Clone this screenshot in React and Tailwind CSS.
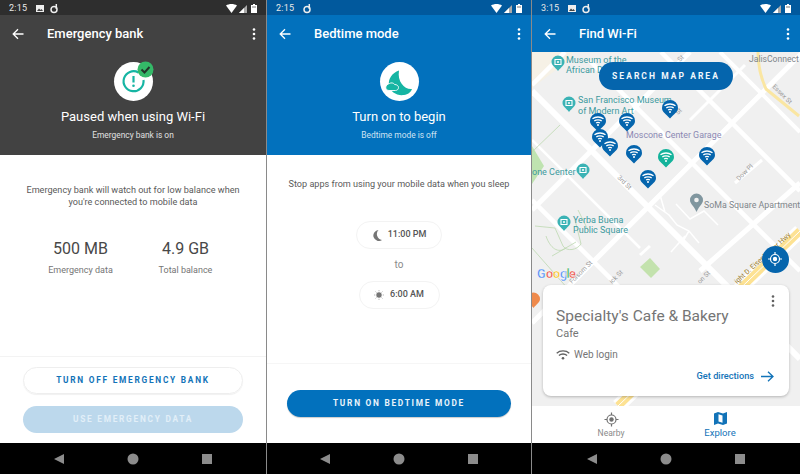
// App.jsx
import React from "react";

const StatusBar = ({ time, bg, image }) => (
  <div className={`flex h-[15px] shrink-0 items-center justify-between pl-[9px] pr-[9px] pt-[2px] ${bg}`}>
    <div className="flex items-center">
      <span className="text-[9px] leading-none text-[#e8e8e8] tracking-[0.2px]">{time}</span>
      {image && (
        <svg width="8" height="7" viewBox="0 0 8 7" className="ml-[9px]">
          <path d="M0 0h8v7H0z" fill="#eee" />
          <path d="M1 6l2-2.5L4.500 5 5.500 4 7 6z" fill="#444" />
        </svg>
      )}
      <svg width="8" height="11" viewBox="0 0 8 11" className={image ? "ml-[6px]" : "ml-[9px]"}>
        <circle cx="4" cy="6.500" r="3" fill="none" stroke="#eee" strokeWidth="1.500" />
        <path d="M6.300 1v5" stroke="#eee" strokeWidth="1.500" />
      </svg>
    </div>
    <div className="flex items-center gap-[2px]">
      <svg width="11" height="9" viewBox="0 0 11 9">
        <path d="M0 1.500C3 -.5 8 -.5 11 1.500L5.500 9z" fill="#fff" />
      </svg>
      <svg width="8" height="8" viewBox="0 0 8 8">
        <path d="M8 0v8H0z" fill="#aaa" />
        <path d="M5 3v5H0z" fill="#fff" />
      </svg>
      <svg width="6" height="9" viewBox="0 0 6 9" className="ml-[2px]">
        <path d="M2 0h2v1h2v8H0V1h2z" fill="#fff" />
        <path d="M1 2h4v2H1z" fill="#bbb" />
      </svg>
    </div>
  </div>
);

const AppBar = ({ title }) => (
  <div className="flex h-[37px] shrink-0 items-center">
    <svg width="12" height="12" viewBox="0 0 12 12" className="ml-[12px]">
      <path d="M11.500 6H1.500M6 1.200L1.200 6 6 10.800" fill="none" stroke="#fff" strokeWidth="1.300" />
    </svg>
    <span className="ml-[23px] flex-1 text-[13px] font-medium leading-none text-white">{title}</span>
    <svg width="4" height="12" viewBox="0 0 4 12" className="mr-[10px]">
      <circle cx="2" cy="1.500" r="1.300" fill="#fff" />
      <circle cx="2" cy="6" r="1.300" fill="#fff" />
      <circle cx="2" cy="10.500" r="1.300" fill="#fff" />
    </svg>
  </div>
);

const NavBar = () => (
  <div className="flex h-[31px] shrink-0 items-center justify-center gap-[63px] bg-black">
    <svg width="10" height="10" viewBox="0 0 10 10">
      <path d="M10 0v10L0 5z" fill="#8c8c8c" />
    </svg>
    <svg width="12" height="12" viewBox="0 0 12 12">
      <circle cx="6" cy="6" r="5.500" fill="#8c8c8c" />
    </svg>
    <div className="h-[10px] w-[10px] bg-[#8c8c8c]" />
  </div>
);

const Hero = ({ title, sub, subColor, children }) => (
  <div className="flex h-[103px] shrink-0 flex-col items-center pt-[10px]">
    <div className="relative h-[39px] w-[39px] rounded-full bg-white">{children}</div>
    <div className="mt-[7px] text-[13px] leading-[18px] text-white">{title}</div>
    <div className={`mt-[3px] text-[8.400px] leading-[12px] ${subColor}`}>{sub}</div>
  </div>
);

const PillButton = ({ className, children }) => (
  <div className={`flex h-[27px] items-center justify-center rounded-full text-[8.300px] font-bold tracking-[0.21em] ${className}`}>
    {children}
  </div>
);

const Stat = ({ value, label }) => (
  <div className="flex w-[105px] flex-col items-center">
    <div className="text-[16px] leading-[20px] text-[#484848]">{value}</div>
    <div className="mt-[5px] text-[9px] leading-[12px] text-[#757575]">{label}</div>
  </div>
);

const TimePill = ({ width, icon, time }) => (
  <div className={`flex h-[28px] items-center justify-center gap-[6px] rounded-full border border-[#f3f3f3] text-[9px] font-medium text-[#555] ${width}`}>
    {icon}
    {time}
  </div>
);

const EmergencyPanel = () => (
  <div className="flex h-full w-[266px] shrink-0 flex-col bg-white">
    <div className="flex shrink-0 flex-col bg-[#424242]">
      <StatusBar time="2:15" bg="bg-[#2e2e2e]" image />
      <AppBar title="Emergency bank" />
      <Hero title="Paused when using Wi-Fi" sub="Emergency bank is on" subColor="text-[#e0e0e0]">
        <svg width="39" height="39" viewBox="0 0 39 39">
          <path d="M24.500 10.500A10 10 0 1 0 29.500 18" fill="none" stroke="#16b5a3" strokeWidth="2.200" />
          <path d="M19.500 14v6.500" stroke="#16b5a3" strokeWidth="2.200" />
          <circle cx="19.500" cy="23.800" r="1.300" fill="#16b5a3" />
        </svg>
        <svg width="17" height="17" viewBox="0 0 17 17" className="absolute right-[-1px] top-[-1px]">
          <circle cx="8.500" cy="8.500" r="8" fill="#34b968" />
          <path d="M4.500 8.500l3 3 5-5.500" fill="none" stroke="#22352a" strokeWidth="2" />
        </svg>
      </Hero>
    </div>
    <div className="flex flex-1 flex-col items-center pt-[30px]">
      <p className="text-center text-[9.100px] leading-[11.500px] text-[#5a5a5a]">
        Emergency bank will watch out for low balance when
        <br />
        you're connected to mobile data
      </p>
      <div className="mt-[31px] flex w-[210px]">
        <Stat value="500 MB" label="Emergency data" />
        <Stat value="4.9 GB" label="Total balance" />
      </div>
    </div>
    <div className="flex h-[87px] shrink-0 flex-col gap-[12px] border-t border-[#f3f3f3] px-[23px] pt-[10px]">
      <PillButton className="border border-[#eeeeee] text-[#1273b8] shadow-[0_1px_1px_rgba(0,0,0,0.06)]">
        TURN OFF EMERGENCY BANK
      </PillButton>
      <PillButton className="bg-[#bcd8ec] text-[#e2eff8]">USE EMERGENCY DATA</PillButton>
    </div>
    <NavBar />
  </div>
);

const BedtimePanel = () => (
  <div className="flex h-full w-[264px] shrink-0 flex-col bg-white">
    <div className="flex shrink-0 flex-col bg-[#0271bd]">
      <StatusBar time="2:15" bg="bg-[#01599d]" />
      <AppBar title="Bedtime mode" />
      <Hero title="Turn on to begin" sub="Bedtime mode is off" subColor="text-[#cfe3f3]">
        <svg width="39" height="39" viewBox="0 0 39 39">
          <path d="M19 8.500C12 11 8 17 9 23c1 7 8 11 15 10 4-.5 7-3 8-6-7 1-15-7-13-18.500z" fill="#16b5a3" />
          <path d="M9.500 21.500c1.500-1 4-.8 5.200 1 2 0 3.800 1.200 3.800 3 0 1.700-1.300 3-3 3H9c-1.800 0-3.200-1.300-3.200-3 0-2 1.700-3.400 3.700-4z" fill="#16b5a3" stroke="#fff" strokeWidth="0.900" />
        </svg>
      </Hero>
    </div>
    <div className="flex flex-1 flex-col items-center pt-[23px]">
      <p className="text-center text-[9.100px] leading-[12px] text-[#5a5a5a]">
        Stop apps from using your mobile data when you sleep
      </p>
      <div className="mt-[31px]">
        <TimePill
          width="w-[86px]"
          time="11:00 PM"
          icon={
            <svg width="10" height="11" viewBox="0 0 10 11">
              <path d="M6.500 0A5.500 5.500 0 1 0 10 10 6 6 0 0 1 6.500 0z" fill="#757575" />
            </svg>
          }
        />
      </div>
      <div className="my-[10px] text-[10px] leading-[12px] text-[#8a8a8a]">to</div>
      <TimePill
        width="w-[81px]"
        time="6:00 AM"
        icon={
          <svg width="10" height="10" viewBox="0 0 10 10">
            <circle cx="5" cy="5" r="2.700" fill="#757575" />
            <path d="M5 0v1.300M5 8.700V10M0 5h1.300M8.700 5H10M1.500 1.500l1 1M7.500 7.500l1 1M1.500 8.500l1-1M7.500 2.500l1-1" stroke="#9a9a9a" strokeWidth="0.700" />
          </svg>
        }
      />
    </div>
    <div className="flex h-[80px] shrink-0 flex-col border-t border-[#f6f6f6] px-[20px] pt-[26px]">
      <PillButton className="bg-[#0271bd] text-[#eaf4fb] shadow-[0_1px_1px_rgba(0,0,0,0.2)]">
        TURN ON BEDTIME MODE
      </PillButton>
    </div>
    <NavBar />
  </div>
);

const WifiPin = ({ x, y, color = "#0565ad" }) => (
  <g transform={`translate(${x} ${y})`}>
    <path d="M-8 0a8 8 0 0 1 16 0c0 4-4 6-8 10.500C-4 6-8 4-8 0z" fill={color} />
    <path d="M-5.500 -2.200C-2.500 -4.600 2.500 -4.600 5.500 -2.200M-3.700 0C-1.800 -1.600 1.800 -1.600 3.700 0M-1.900 2.100C-.9 1.300 .9 1.300 1.900 2.100" fill="none" stroke="#fff" strokeWidth="1.300" />
    <circle cx="0" cy="4" r="1" fill="#fff" />
  </g>
);

const PoiPin = ({ x, y, color }) => (
  <g transform={`translate(${x} ${y})`}>
    <path d="M-6.500 0a6.500 6.500 0 0 1 13 0c0 3.500-3.500 5-6.500 9C-3 5-6.500 3.500-6.500 0z" fill={color} />
    <path d="M-3 -2.500h6v5h-6z" fill="none" stroke="#fff" strokeWidth="1.100" />
    <circle cx="0" cy="0" r="1" fill="#fff" />
  </g>
);

const MapDrawing = () => (
  <svg viewBox="532 52 268 354" className="absolute inset-0 h-full w-full font-['Roboto',sans-serif]">
    <rect x="532" y="52" width="268" height="354" fill="#f0f0f0" />
    <path d="M532 52h40v6l-40 30z" fill="#f6f1e6" />
    <path d="M532 146l12 20-12 18z" fill="#bfe3b0" />
    <path d="M640 267l10-9 10 11-9 9z" fill="#c3e2ad" />
    {/* roads */}
    <g stroke="#fff" fill="none">
      <path d="M532 91L800 359" strokeWidth="6" />
      <path d="M590 61L800 271" strokeWidth="4.500" />
      <path d="M661 52L800 191" strokeWidth="4.500" />
      <path d="M532 200L700 368" strokeWidth="4.500" />
      <path d="M532 140L640 248" strokeWidth="2.500" />
      <path d="M720 52L800 132" strokeWidth="4" />
      <path d="M532 323L803 52" strokeWidth="5" />
      <path d="M532 210L690 52" strokeWidth="5" />
      <path d="M532 85L565 52" strokeWidth="4.500" />
      <path d="M700 271L800 183" strokeWidth="5" />
      <path d="M735 183L762 160" strokeWidth="3" />
      <path d="M640 255L650 246M690 120L745 65" strokeWidth="3" />
      <path d="M800 231L618 406" strokeWidth="14" />
    </g>
    <path d="M800 231L618 406" stroke="#fde293" strokeWidth="8" fill="none" />
    <path d="M800 231L618 406" stroke="#fff" strokeWidth="1" fill="none" />
    <path d="M758 52c0 14 3 26 8 37l33 27" stroke="#fae6a2" strokeWidth="3" fill="none" />
    {/* walkways and park paths */}
    <path d="M655 205l14 10 8 10 12 6 10 12M676 204l14 15 14-8 14 14M689 231l-6 10M660 195l5 17M685 236l-14 16" stroke="#fff" strokeWidth="1.500" fill="none" />
    <path d="M560 125l-28 27M535 226l20 2 8 18c4 6 14 4 18-2l-6-24M546 236c4 12 12 18 20 12M532 248l44 50M552 256l24-14M578 210l10 20" stroke="#bcd8b0" strokeWidth="0.800" fill="none" />
    {/* labels */}
    <g fill="#3d9a9e" fontSize="9">
      <text x="566" y="63">Museum of the</text>
      <text x="566" y="73">African D</text>
      <text x="578" y="103">San Francisco Museum</text>
      <text x="578" y="113.500">of Modern Art</text>
      <text x="532" y="175">one Center</text>
      <text x="573" y="222.500">Yerba Buena</text>
      <text x="573" y="233">Public Square</text>
    </g>
    <text x="626" y="138" fontSize="8.900" fill="#8b88b3">Moscone Center Garage</text>
    <text x="704" y="208" fontSize="8.800" fill="#80868b">SoMa Square Apartments</text>
    <text x="749" y="62" fontSize="8.600" fill="#80868b">JalisConnect</text>
    <g fill="#9a9a9a" fontSize="6.500">
      <text transform="translate(617 178) rotate(45)">3rd St</text>
      <text transform="translate(739 181) rotate(-45)">Dow Pl</text>
      <text transform="translate(572 284) rotate(-45)">Folsom St</text>
      <text transform="translate(772 87) rotate(45)">Essex St</text>
      <text transform="translate(678 115) rotate(-45)">St</text>
      <text transform="translate(680 62) rotate(-45)">St</text>
      <text transform="translate(700 284) rotate(-45)">on St</text>
      <text transform="translate(612 284) rotate(-45)">ick St</text>
    </g>
    <text transform="translate(737 284) rotate(-42)" fontSize="7" fill="#9a7b2c">ight D. Eisenhower Hwy</text>
    <PoiPin x={558} y={62} color="#3bb3b5" />
    <PoiPin x={569} y={103} color="#3bb3b5" />
    <PoiPin x={583} y={170} color="#3bb3b5" />
    <PoiPin x={564} y={222} color="#3bb3b5" />
    <path d="M690 200a6.500 6.500 0 0 1 13 0c0 4-3.500 5-6.500 12-3-7-6.500-8-6.500-12z" fill="#80969f" />
    <circle cx="696.500" cy="200" r="2.300" fill="#f0f0f0" />
    <path d="M527 299a6.500 6.500 0 0 1 13 0c0 3.500-3.500 5-6.500 9-3-4-6.500-5.500-6.500-9z" fill="#ef8a4c" />
    <g fontSize="12.500" fontWeight="500" stroke="#fff" strokeWidth="0.300">
      <text x="537" y="278" fill="#4285f4">G</text>
      <text x="546" y="278" fill="#ea4335">o</text>
      <text x="553" y="278" fill="#fbbc05">o</text>
      <text x="560" y="278" fill="#4285f4">g</text>
      <text x="566.500" y="278" fill="#34a853">l</text>
      <text x="569" y="278" fill="#ea4335">e</text>
    </g>
    <WifiPin x={670} y={108} />
    <WifiPin x={598} y={121} />
    <WifiPin x={627} y={121} />
    <WifiPin x={600} y={137} />
    <WifiPin x={610} y={146} />
    <WifiPin x={634} y={153} />
    <WifiPin x={666} y={157} color="#14b39b" />
    <WifiPin x={707} y={155} />
    <WifiPin x={648} y={178} />
  </svg>
);

const FindWifiPanel = () => (
  <div className="flex h-full w-[268px] shrink-0 flex-col bg-white">
    <div className="flex shrink-0 flex-col bg-[#0271bd]">
      <StatusBar time="3:15" bg="bg-[#01599d]" image />
      <AppBar title="Find Wi-Fi" />
    </div>
    <div className="relative flex-1 overflow-hidden">
      <MapDrawing />
      <div className="absolute left-[67px] top-[10px] flex h-[28px] w-[134px] items-center justify-center rounded-full bg-[#0565ad] text-[8.500px] font-bold tracking-[0.24em] text-[#f2f8fc]">
        SEARCH MAP AREA
      </div>
      <div className="absolute left-[229.500px] top-[193.500px] flex h-[27px] w-[27px] items-center justify-center rounded-full bg-[#0565ad]">
        <svg width="16" height="16" viewBox="0 0 16 16">
          <circle cx="8" cy="8" r="4.500" fill="none" stroke="#fff" strokeWidth="1.200" />
          <circle cx="8" cy="8" r="2.200" fill="#fff" />
          <path d="M8 1v2.500M8 12.500V15M1 8h2.500M12.500 8H15" stroke="#fff" strokeWidth="1.200" />
        </svg>
      </div>
      <div className="absolute left-[11px] top-[233px] h-[111px] w-[246px] rounded-[8px] bg-white pl-[13px] pr-[13px] shadow-[0_1px_3px_rgba(0,0,0,0.25)]">
        <svg width="4" height="12" viewBox="0 0 4 12" className="absolute right-[14px] top-[10px]">
          <circle cx="2" cy="1.500" r="1.300" fill="#616161" />
          <circle cx="2" cy="6" r="1.300" fill="#616161" />
          <circle cx="2" cy="10.500" r="1.300" fill="#616161" />
        </svg>
        <div className="pt-[21px] text-[15.500px] leading-[20px] text-[#757575]">Specialty's Cafe & Bakery</div>
        <div className="mt-[1px] text-[11px] leading-[14px] text-[#757575]">Cafe</div>
        <div className="mt-[7px] flex items-center gap-[4px] text-[10px] leading-[14px] text-[#757575]">
          <svg width="14" height="10" viewBox="0 0 14 10">
            <path d="M.7 3.200C4 .2 10 .2 13.300 3.200M2.900 5.500C5.200 3.500 8.800 3.500 11.100 5.500" fill="none" stroke="#616161" strokeWidth="1.300" />
            <circle cx="7" cy="8.300" r="1.300" fill="#616161" />
          </svg>
          Web login
        </div>
        <div className="mt-[7px] flex items-center justify-end gap-[7px] pr-[2px] text-[9.200px] font-medium leading-[14px] text-[#1273b8]">
          Get directions
          <svg width="13" height="11" viewBox="0 0 13 11">
            <path d="M0 5.500h12M7 .7l5 4.800-5 4.800" fill="none" stroke="#1273b8" strokeWidth="1.300" />
          </svg>
        </div>
      </div>
    </div>
    <div className="flex h-[37px] shrink-0 bg-white">
      <div className="flex w-[158px] flex-col items-center pt-[6px] text-[#8a8a8a]">
        <svg width="15" height="15" viewBox="0 0 15 15">
          <circle cx="7.500" cy="7.500" r="4.500" fill="none" stroke="#6f6f6f" strokeWidth="1.200" />
          <circle cx="7.500" cy="7.500" r="2.200" fill="#6f6f6f" />
          <path d="M7.500 .5V3M7.500 12v2.500M.5 7.500H3M12 7.500h2.500" stroke="#6f6f6f" strokeWidth="1.200" />
        </svg>
        <span className="mt-[1px] text-[8.500px] leading-[11px]">Nearby</span>
      </div>
      <div className="flex w-[60px] flex-col items-center pt-[6px] text-[#1273b8]">
        <svg width="13" height="13" viewBox="0 0 13 13">
          <path d="M0 1.500L4 0l5 1.500L13 0v11.500L9 13l-5-1.500L0 13z" fill="#1273b8" />
          <path d="M4.500 2.300l4 1.200v7.200l-4-1.200z" fill="#fff" />
        </svg>
        <span className="mt-[1px] text-[9.500px] leading-[13px]">Explore</span>
      </div>
    </div>
    <NavBar />
  </div>
);

export default function App() {
  return (
    <div className="flex h-[474px] w-[800px] justify-between overflow-hidden bg-[#8a8a8a] font-['Roboto',sans-serif]">
      <EmergencyPanel />
      <BedtimePanel />
      <FindWifiPanel />
    </div>
  );
}
